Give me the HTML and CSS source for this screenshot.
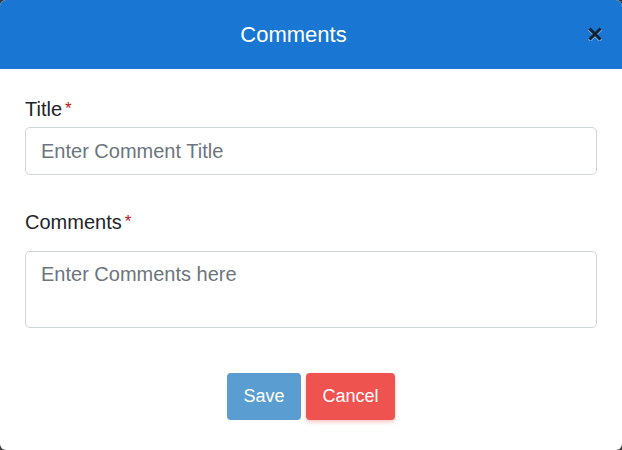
FILE: index.html
```html
<!DOCTYPE html>
<html>
<head>
<meta charset="utf-8">
<link rel="stylesheet" href="styles.css">
</head>
<body>
<div class="modal">
  <div class="modal-header">
    <h2 class="modal-title">Comments</h2>
    <button class="close" aria-label="Close">
      <svg width="14" height="14" viewBox="0 0 14 14"><path d="M2.5 2.5 L11.5 11.5 M11.5 2.5 L2.5 11.5" stroke="#fff" stroke-width="3.8" stroke-linecap="square" opacity="0.35" transform="translate(0,1)"/><path d="M2.5 2.5 L11.5 11.5 M11.5 2.5 L2.5 11.5" stroke="#0f2236" stroke-width="3" stroke-linecap="square"/></svg>
    </button>
  </div>
  <div class="modal-body">
    <div class="field">
      <label class="label label-title">Title<span class="req">*</span></label>
      <input class="control" type="text" placeholder="Enter Comment Title">
    </div>
    <div class="field">
      <label class="label label-comments">Comments<span class="req">*</span></label>
      <textarea class="control area" placeholder="Enter Comments here"></textarea>
    </div>
    <div class="actions">
      <button class="btn btn-save">Save</button>
      <button class="btn btn-cancel">Cancel</button>
    </div>
  </div>
</div>
</body>
</html>
```

FILE: styles.css
```css
html, body {
  margin: 0;
  padding: 0;
  background: #3a3a3a;
}
body {
  font-family: "Liberation Sans", Arial, sans-serif;
  width: 622px;
  height: 450px;
  overflow: hidden;
}
.modal {
  width: 622px;
  height: 450px;
  background: #fff;
  border-radius: 6px;
  overflow: hidden;
  display: flex;
  flex-direction: column;
}
.modal-header {
  height: 69px;
  background: #1976d2;
  display: flex;
  align-items: center;
  justify-content: center;
  position: relative;
}
.modal-title {
  margin: 0;
  font-size: 22px;
  font-weight: normal;
  color: #fff;
  line-height: 1;
  margin-left: -35px;
}
.close {
  position: absolute;
  right: 20px;
  top: 27px;
  background: none;
  border: 0;
  padding: 0;
  width: 14px;
  height: 14px;
  display: flex;
}
.modal-body {
  padding: 28px 25px 0 25px;
  display: flex;
  flex-direction: column;
}
.field {
  display: flex;
  flex-direction: column;
}
.label {
  font-size: 20px;
  line-height: 24px;
  color: #212529;
}
.label-title {
  margin-bottom: 4px;
}
.label-comments {
  margin-top: 35px;
  margin-bottom: 15px;
}
.req {
  color: #c0121b;
  font-size: 17px;
  margin-left: 3px;
  position: relative;
  top: -2px;
}
.control {
  box-sizing: border-box;
  width: 572px;
  height: 48px;
  border: 1px solid #ced4da;
  border-radius: 5px;
  padding: 0 15px;
  font-family: "Liberation Sans", Arial, sans-serif;
  font-size: 20px;
  color: #495057;
  background: #fff;
  margin: 0;
  outline: none;
}
.control::placeholder {
  color: #6c757d;
}
.area {
  height: 77px;
  padding: 10px 15px;
  resize: none;
  line-height: 24px;
  display: block;
}
.actions {
  margin-top: 45px;
  display: flex;
  justify-content: center;
  gap: 5px;
}
.btn {
  height: 47px;
  border: 0;
  border-radius: 4px;
  color: #fff;
  font-family: "Liberation Sans", Arial, sans-serif;
  font-size: 18px;
  padding: 0;
}
.btn-save {
  width: 74px;
  background: #5a9dd0;
}
.btn-cancel {
  width: 89px;
  background: #ef5350;
  box-shadow: 0 2px 4px rgba(239, 83, 80, 0.35);
}
```
